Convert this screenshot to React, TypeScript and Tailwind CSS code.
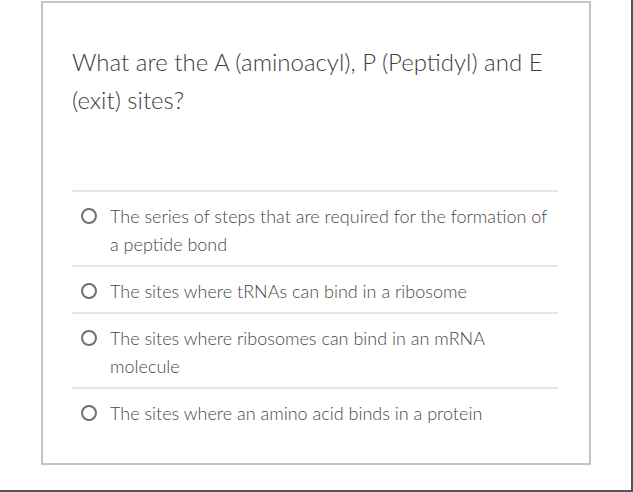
const options = [
  'The series of steps that are required for the formation of a peptide bond',
  'The sites where tRNAs can bind in a ribosome',
  'The sites where ribosomes can bind in an mRNA molecule',
  'The sites where an amino acid binds in a protein',
];

export default function App() {
  return (
    <div
      className="w-[633px] h-[492px] bg-white border-r-2 border-b-2 border-[#555] overflow-hidden"
      style={{ fontFamily: 'Lato, "Open Sans", sans-serif' }}
    >
      <div className="ml-[41px] w-[550px] h-[464px] mt-[1px] border-2 border-[#c4c4c4] pl-[29px] pr-[31px] pt-[40px]">
        <h2 className="text-[24px] leading-[38px] text-[#3d3d3d] font-light">
          What are the A (aminoacyl), P (Peptidyl) and E (exit) sites?
        </h2>
        <div className="mt-[71px] border-t-2 border-[#e6e6e6]">
          {options.map((text, i) => (
            <label
              key={i}
              className={`flex items-start gap-[13px] pl-[9px] pr-2 pt-[10px] pb-[7px] ${
                i < options.length - 1 ? 'border-b-2 border-[#e6e6e6]' : ''
              }`}
            >
              <span className="mt-[6px] w-4 h-4 shrink-0 rounded-full border-2 border-[#707070]" />
              <span className="text-[18px] leading-[28px] text-[#474747] font-light">{text}</span>
            </label>
          ))}
        </div>
      </div>
    </div>
  );
}
